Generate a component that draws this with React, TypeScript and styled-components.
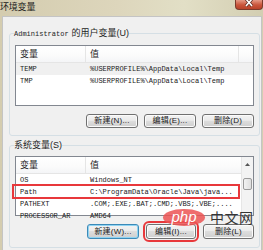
import React from "react";
import styled, { createGlobalStyle } from "styled-components";

const GlobalStyle = createGlobalStyle`
  html, body {
    margin: 0;
    padding: 0;
    background: #f0f0f0;
  }
  * {
    box-sizing: border-box;
  }
`;

const cjk = `"Liberation Sans", "Noto Sans CJK SC", sans-serif`;
const mono = `"Liberation Mono", "Noto Sans CJK SC", monospace`;

const Window = styled.div`
  position: relative;
  width: 263px;
  height: 250px;
  overflow: hidden;
  display: flex;
  flex-direction: column;
  background: linear-gradient(90deg, #d4ccaf 0%, #ddd6bc 45%, #e2dfc6 70%, #d3ceb2 100%);
`;

const TitleBar = styled.div`
  height: 16px;
  display: flex;
  align-items: flex-start;
  flex-shrink: 0;
`;

const Title = styled.div`
  font-family: ${cjk};
  font-size: 9px;
  line-height: 14px;
  color: #1b1b1b;
  letter-spacing: -0.2px;
`;

const CloseButton = styled.div`
  margin-left: auto;
  width: 28px;
  height: 10px;
  border: 1px solid #7a3a2c;
  border-top: none;
  border-radius: 0 0 4px 4px;
  background: linear-gradient(#e59a86, #c9543a 55%, #b8432a);
  display: flex;
  justify-content: center;
  align-items: flex-start;
`;

const Body = styled.div`
  flex: 1;
  margin: 0 1px 0 2px;
  border: 1px solid #c4c4c4;
  border-bottom: none;
  background: #f0f0f0;
  padding: 11px 1px 0 6px;
`;

const Group = styled.fieldset<{ $top?: number; $bottom?: number }>`
  margin: ${(p) => p.$top ?? 0}px 0 0 0;
  border: 1px solid #d5dfe5;
  border-radius: 3px;
  padding: 6px 5px ${(p) => p.$bottom ?? 7}px 5px;
  min-width: 0;
`;

const Legend = styled.legend`
  padding: 0;
  margin-left: -1px;
  font-family: ${cjk};
  font-size: 9px;
  line-height: 10px;
  color: #1e1e1e;
`;

const MonoText = styled.span`
  font-family: ${mono};
  font-size: 7px;
  margin-right: 3px;
`;

const List = styled.div<{ $height: number }>`
  height: ${(p) => p.$height}px;
  border: 1px solid #828790;
  background: #fff;
  display: flex;
`;

const ListMain = styled.div`
  flex: 1;
  min-width: 0;
  display: flex;
  flex-direction: column;
`;

const Header = styled.div<{ $filler: number }>`
  height: 17px;
  flex-shrink: 0;
  display: grid;
  grid-template-columns: 70px 1fr ${(p) => p.$filler}px;
  border-bottom: 1px solid #e5e5e5;
  background: linear-gradient(#ffffff, #fbfbfb 60%, #f4f5f7);
`;

const HeaderCell = styled.div`
  font-family: ${cjk};
  font-size: 9px;
  line-height: 16px;
  color: #1e1e1e;
  padding-left: 4px;
  border-right: 1px solid #e5e5e5;
  &:last-child {
    border-right: none;
  }
`;

const Rows = styled.div`
  flex: 1;
  overflow-x: visible;
  overflow-y: clip;
`;

const Row = styled.div<{ $shade?: boolean }>`
  position: relative;
  height: 12px;
  display: grid;
  grid-template-columns: 70px 1fr;
  background: ${(p) => (p.$shade ? "#f0f0f0" : "transparent")};
  font-family: ${mono};
  font-size: 7px;
  line-height: 12px;
  color: #1a1a1a;
  white-space: nowrap;
`;

const Cell = styled.div`
  padding-left: 4px;
  overflow: hidden;
`;

const Highlight = styled.div`
  position: absolute;
  left: -4px;
  right: 1px;
  top: -2px;
  bottom: -1px;
  border: 2px solid #e8383b;
  pointer-events: none;
`;

const Scrollbar = styled.div`
  width: 12px;
  flex-shrink: 0;
  border-left: 1px solid #e6e6e6;
  background: #f3f3f3;
  display: flex;
  flex-direction: column;
  align-items: center;
`;

const ScrollArrow = styled.div`
  height: 15px;
  width: 100%;
  display: flex;
  align-items: center;
  justify-content: center;
`;

const Thumb = styled.div`
  margin-top: 6px;
  width: 9px;
  height: 12px;
  border: 1px solid #9a9a9a;
  border-radius: 2px;
  background: linear-gradient(90deg, #f2f2f2, #dedede);
`;

const ButtonRow = styled.div<{ $gap: number }>`
  display: flex;
  justify-content: flex-end;
  gap: ${(p) => p.$gap}px;
  margin-top: 8px;
`;

const Button = styled.div<{ $focus?: boolean; $marked?: boolean; $h: number; $w?: number }>`
  width: ${(p) => p.$w ?? 52}px;
  height: ${(p) => p.$h}px;
  border: 1px solid ${(p) => (p.$focus ? "#3c8ab8" : "#707070")};
  border-radius: 3px;
  background: linear-gradient(#f3f3f3, #ebebeb 45%, #dddddd 50%, #cfcfcf);
  box-shadow: ${(p) => (p.$focus ? "inset 0 0 0 1px #8fd3f2" : "inset 0 0 0 1px #fbfbfb")};
  outline: ${(p) => (p.$marked ? "2px solid #e8383b" : "none")};
  outline-offset: 1px;
  font-family: ${cjk};
  font-size: 8px;
  line-height: ${(p) => p.$h - 2}px;
  color: #1a1a1a;
  text-align: center;
  white-space: nowrap;
  letter-spacing: 0.2px;
`;

const Watermark = styled.div`
  position: absolute;
  left: 163px;
  top: 209px;
  display: flex;
  align-items: center;
  gap: 5px;
  pointer-events: none;
`;

const PhpBadge = styled.div`
  width: 42px;
  height: 17px;
  border-radius: 50%;
  background: rgba(236, 84, 84, 0.85);
  color: #fff;
  font-family: "Liberation Sans", sans-serif;
  font-style: italic;
  font-size: 15px;
  line-height: 15px;
  text-align: center;
`;

const SiteName = styled.div`
  font-family: "Noto Sans CJK SC", sans-serif;
  font-size: 14px;
  line-height: 15px;
  color: #353535;
  letter-spacing: 0.5px;
`;

type Var = { name: string; value: string };

const userVars: Var[] = [
  { name: "TEMP", value: "%USERPROFILE%\\AppData\\Local\\Temp" },
  { name: "TMP", value: "%USERPROFILE%\\AppData\\Local\\Temp" },
];

const systemVars: Var[] = [
  { name: "OS", value: "Windows_NT" },
  { name: "Path", value: "C:\\ProgramData\\Oracle\\Java\\java..." },
  { name: "PATHEXT", value: ".COM;.EXE;.BAT;.CMD;.VBS;.VBE;...." },
  { name: "PROCESSOR_AR", value: "AMD64" },
];

const App: React.FC = () => {
  return (
    <>
      <GlobalStyle />
      <Window>
        <TitleBar>
          <Title>环境变量</Title>
          <CloseButton>
            <svg width="10" height="7" viewBox="0 0 10 7">
              <path d="M2 -1 L8 6 M8 -1 L2 6" stroke="#5a2a20" strokeWidth="3" />
              <path d="M2 -1 L8 6 M8 -1 L2 6" stroke="#fff" strokeWidth="1.6" />
            </svg>
          </CloseButton>
        </TitleBar>
        <Body>
          <Group>
            <Legend>
              <MonoText>Administrator</MonoText>的用户变量(U)
            </Legend>
            <List $height={61}>
              <ListMain>
                <Header $filler={14}>
                  <HeaderCell>变量</HeaderCell>
                  <HeaderCell>值</HeaderCell>
                  <HeaderCell />
                </Header>
                <Rows>
                  {userVars.map((v, i) => (
                    <Row key={v.name} $shade={i === 0}>
                      <Cell>{v.name}</Cell>
                      <Cell>{v.value}</Cell>
                    </Row>
                  ))}
                </Rows>
              </ListMain>
            </List>
            <ButtonRow $gap={6}>
              <Button $h={14}>新建(N)...</Button>
              <Button $h={14}>编辑(E)...</Button>
              <Button $h={14}>删除(D)</Button>
            </ButtonRow>
          </Group>
          <Group $top={4} $bottom={8}>
            <Legend>系统变量(S)</Legend>
            <List $height={60}>
              <ListMain>
                <Header $filler={0}>
                  <HeaderCell>变量</HeaderCell>
                  <HeaderCell>值</HeaderCell>
                </Header>
                <Rows>
                  {systemVars.map((v) => (
                    <Row key={v.name}>
                      <Cell>{v.name}</Cell>
                      <Cell>{v.value}</Cell>
                      {v.name === "Path" && <Highlight />}
                    </Row>
                  ))}
                </Rows>
              </ListMain>
              <Scrollbar>
                <ScrollArrow>
                  <svg width="5" height="3" viewBox="0 0 5 3">
                    <path d="M0 3 L2.5 0 L5 3 Z" fill="#555" />
                  </svg>
                </ScrollArrow>
                <Thumb />
              </Scrollbar>
            </List>
            <ButtonRow $gap={7}>
              <Button $h={15} $focus>新建(W)...</Button>
              <Button $h={15} $w={50} $marked>编辑(I)...</Button>
              <Button $h={15} $w={51}>删除(L)</Button>
            </ButtonRow>
          </Group>
        </Body>
        <Watermark>
          <PhpBadge>php</PhpBadge>
          <SiteName>中文网</SiteName>
        </Watermark>
      </Window>
    </>
  );
};

export default App;
